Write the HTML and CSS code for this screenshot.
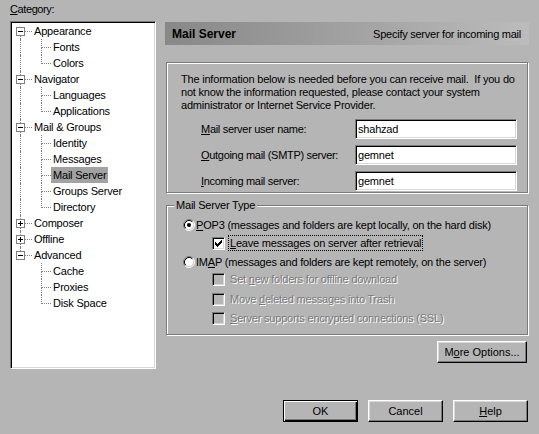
FILE: index.html
```html
<!DOCTYPE html>
<html>
<head>
<meta charset="utf-8">
<title>Preferences</title>
<link rel="stylesheet" href="styles.css">
</head>
<body>
<div class="dlg">
  <div class="main">
    <div class="left">
      <div class="cat-label"><u>C</u>ategory:</div>
      <div class="tree">
        <div class="row">
          <span class="rail"><span class="seg t"></span><svg class="box" width="9" height="9" viewBox="0 0 9 9"><rect x=".5" y=".5" width="8" height="8" fill="#fff" stroke="#808080"/><path d="M2 4.5h5" stroke="#000"/></svg><span class="seg b on"></span></span>
          <span class="hd"></span><span class="lbl">Appearance</span>
        </div>
        <div class="row"><span class="vl on"></span><span class="elb"><span class="u"></span><span class="d on"></span></span><span class="lbl">Fonts</span></div>
        <div class="row"><span class="vl on"></span><span class="elb"><span class="u"></span><span class="d"></span></span><span class="lbl">Colors</span></div>
        <div class="row">
          <span class="rail"><span class="seg t on"></span><svg class="box" width="9" height="9" viewBox="0 0 9 9"><rect x=".5" y=".5" width="8" height="8" fill="#fff" stroke="#808080"/><path d="M2 4.5h5" stroke="#000"/></svg><span class="seg b on"></span></span>
          <span class="hd"></span><span class="lbl">Navigator</span>
        </div>
        <div class="row"><span class="vl on"></span><span class="elb"><span class="u"></span><span class="d on"></span></span><span class="lbl">Languages</span></div>
        <div class="row"><span class="vl on"></span><span class="elb"><span class="u"></span><span class="d"></span></span><span class="lbl">Applications</span></div>
        <div class="row">
          <span class="rail"><span class="seg t on"></span><svg class="box" width="9" height="9" viewBox="0 0 9 9"><rect x=".5" y=".5" width="8" height="8" fill="#fff" stroke="#808080"/><path d="M2 4.5h5" stroke="#000"/></svg><span class="seg b on"></span></span>
          <span class="hd"></span><span class="lbl">Mail &amp; Groups</span>
        </div>
        <div class="row"><span class="vl on"></span><span class="elb"><span class="u"></span><span class="d on"></span></span><span class="lbl">Identity</span></div>
        <div class="row"><span class="vl on"></span><span class="elb"><span class="u"></span><span class="d on"></span></span><span class="lbl">Messages</span></div>
        <div class="row"><span class="vl on"></span><span class="elb"><span class="u"></span><span class="d on"></span></span><span class="lbl sel">Mail Server</span></div>
        <div class="row"><span class="vl on"></span><span class="elb"><span class="u"></span><span class="d on"></span></span><span class="lbl">Groups Server</span></div>
        <div class="row"><span class="vl on"></span><span class="elb"><span class="u"></span><span class="d"></span></span><span class="lbl">Directory</span></div>
        <div class="row">
          <span class="rail"><span class="seg t on"></span><svg class="box" width="9" height="9" viewBox="0 0 9 9"><rect x=".5" y=".5" width="8" height="8" fill="#fff" stroke="#808080"/><path d="M2 4.5h5M4.5 2v5" stroke="#000"/></svg><span class="seg b on"></span></span>
          <span class="hd"></span><span class="lbl">Composer</span>
        </div>
        <div class="row">
          <span class="rail"><span class="seg t on"></span><svg class="box" width="9" height="9" viewBox="0 0 9 9"><rect x=".5" y=".5" width="8" height="8" fill="#fff" stroke="#808080"/><path d="M2 4.5h5M4.5 2v5" stroke="#000"/></svg><span class="seg b on"></span></span>
          <span class="hd"></span><span class="lbl">Offline</span>
        </div>
        <div class="row">
          <span class="rail"><span class="seg t on"></span><svg class="box" width="9" height="9" viewBox="0 0 9 9"><rect x=".5" y=".5" width="8" height="8" fill="#fff" stroke="#808080"/><path d="M2 4.5h5" stroke="#000"/></svg><span class="seg b"></span></span>
          <span class="hd"></span><span class="lbl">Advanced</span>
        </div>
        <div class="row"><span class="vl"></span><span class="elb"><span class="u"></span><span class="d on"></span></span><span class="lbl">Cache</span></div>
        <div class="row"><span class="vl"></span><span class="elb"><span class="u"></span><span class="d on"></span></span><span class="lbl">Proxies</span></div>
        <div class="row"><span class="vl"></span><span class="elb"><span class="u"></span><span class="d"></span></span><span class="lbl">Disk Space</span></div>
      </div>
    </div>

    <div class="right">
      <div class="hdr"><span class="hdr-title">Mail Server</span><span class="hdr-desc">Specify server for incoming mail</span></div>

      <div class="grp grp1">
        <p class="info">The information below is needed before you can receive mail.&nbsp; If you do<br>not know the information requested, please contact your system<br>administrator or Internet Service Provider.</p>
        <div class="field first"><span class="flabel"><u>M</u>ail server user name:</span><input class="tb" type="text" value="shahzad"></div>
        <div class="field"><span class="flabel"><u>O</u>utgoing mail (SMTP) server:</span><input class="tb" type="text" value="gemnet"></div>
        <div class="field"><span class="flabel"><u>I</u>ncoming mail server:</span><input class="tb" type="text" value="gemnet"></div>
      </div>

      <div class="grp grp2">
        <div class="legend">Mail Server Type</div>
        <div class="opt radio-row r1">
          <svg class="radio" width="12" height="12" viewBox="0 0 12 12"><circle cx="6" cy="6" r="4.5" fill="#fff"/><path d="M2.11 9.89A5.5 5.5 0 0 1 9.89 2.11" fill="none" stroke="#7a7a7a"/><path d="M9.89 2.11A5.5 5.5 0 0 1 2.11 9.89" fill="none" stroke="#fff"/><path d="M2.82 9.18A4.5 4.5 0 0 1 9.18 2.82" fill="none" stroke="#000"/><path d="M9.18 2.82A4.5 4.5 0 0 1 2.82 9.18" fill="none" stroke="#d8d8d8"/><circle cx="6" cy="6" r="2" fill="#000"/></svg>
          <span class="txt"><u>P</u>OP3 (messages and folders are kept locally, on the hard disk)</span>
        </div>
        <div class="opt chk-row c1">
          <span class="chk"><svg width="11" height="11" viewBox="0 0 11 11" shape-rendering="crispEdges"><path d="M8 2h1v1H8zM7 3h2v1H7zM2 4h1v1H2zM6 4h3v1H6zM2 5h2v1H2zM5 5h3v1H5zM2 6h5v1H2zM3 7h3v1H3zM4 8h1v1H4z" fill="#000"/></svg></span>
          <span class="txt focus"><u>L</u>eave messages on server after retrieval</span>
        </div>
        <div class="opt radio-row r2">
          <svg class="radio" width="12" height="12" viewBox="0 0 12 12"><circle cx="6" cy="6" r="4.5" fill="#fff"/><path d="M2.11 9.89A5.5 5.5 0 0 1 9.89 2.11" fill="none" stroke="#7a7a7a"/><path d="M9.89 2.11A5.5 5.5 0 0 1 2.11 9.89" fill="none" stroke="#fff"/><path d="M2.82 9.18A4.5 4.5 0 0 1 9.18 2.82" fill="none" stroke="#000"/><path d="M9.18 2.82A4.5 4.5 0 0 1 2.82 9.18" fill="none" stroke="#d8d8d8"/></svg>
          <span class="txt">IM<u>A</u>P (messages and folders are kept remotely, on the server)</span>
        </div>
        <div class="opt chk-row dis c2"><span class="chk"></span><span class="txt">Set <u>n</u>ew folders for offline download</span></div>
        <div class="opt chk-row dis c3"><span class="chk"></span><span class="txt">Move <u>d</u>eleted messages into Trash</span></div>
        <div class="opt chk-row dis c4"><span class="chk"></span><span class="txt"><u>S</u>erver supports encrypted connections (SSL)</span></div>
      </div>

      <div class="more-row"><button class="btn more" type="button">M<u>o</u>re Options...</button></div>
    </div>
  </div>

  <div class="footer">
    <button class="btn default" type="button">OK</button>
    <button class="btn" type="button">Cancel</button>
    <button class="btn" type="button"><u>H</u>elp</button>
  </div>
</div>
</body>
</html>
```

FILE: styles.css
```css
:root {
  --bg: #b5b5b5;
  --shadow: #7a7a7a;
  --light: #d8d8d8;
  --dot: #808080;
}

* { box-sizing: border-box; }

html, body {
  margin: 0;
  padding: 0;
  background: var(--bg);
}

body {
  width: 539px;
  height: 434px;
  overflow: hidden;
  font-family: "Liberation Sans", Arial, sans-serif;
  font-size: 11px;
  letter-spacing: -0.2px;
  color: #000;
}

.dlg {
  display: flex;
  flex-direction: column;
}

.main {
  display: flex;
  height: 369px;
}

/* ---------- left: category tree ---------- */
.left {
  width: 146px;
  margin-left: 10px;
  display: flex;
  flex-direction: column;
}

.cat-label {
  margin-top: 3px;
  height: 18px;
  line-height: 13px;
  letter-spacing: -0.4px;
}

.tree {
  height: 348px;
  background: #fff;
  border: 1px solid;
  border-color: var(--shadow) #fff #fff var(--shadow);
  box-shadow: inset 1px 1px 0 #000, inset -1px -1px 0 var(--light);
  padding: 1px;
}

.row {
  display: flex;
  height: 16px;
}

.rail {
  width: 9px;
  margin-left: 4px;
  display: flex;
  flex-direction: column;
}

.seg {
  width: 1px;
  margin-left: 4px;
}
.seg.t { height: 4px; }
.seg.b { height: 3px; }
.seg.on { border-left: 1px dotted var(--dot); }

.box { display: block; flex: none; }

.hd {
  width: 7px;
  height: 9px;
  border-bottom: 1px dotted var(--dot);
}

.vl {
  width: 1px;
  margin-left: 8px;
}
.vl.on { border-left: 1px dotted var(--dot); }

.elb {
  width: 10px;
  margin-left: 20px;
  display: flex;
  flex-direction: column;
}
.elb .u {
  height: 9px;
  border-left: 1px dotted var(--dot);
  border-bottom: 1px dotted var(--dot);
}
.elb .d { flex: 1; }
.elb .d.on { border-left: 1px dotted var(--dot); }

.lbl {
  line-height: 16px;
  padding: 0 2px;
  white-space: nowrap;
}
.lbl.sel { background: #a2a2a2; }

/* ---------- right pane ---------- */
.right {
  width: 364px;
  margin-left: 9px;
  display: flex;
  flex-direction: column;
}

.hdr {
  margin-top: 22px;
  height: 23px;
  display: flex;
  align-items: center;
  justify-content: space-between;
  padding: 0 8px 0 7px;
  background: linear-gradient(to right, #888888, #a6a6a6 60%, #bcbcbc);
}

.hdr-title {
  font-weight: bold;
  font-size: 12px;
  letter-spacing: 0;
}

.hdr-desc { letter-spacing: -0.25px; }

.grp {
  width: 362px;
  margin-left: 1px;
  border: 1px solid var(--shadow);
  box-shadow: inset 1px 1px 0 #fff, 1px 1px 0 #fff;
}

.grp1 {
  margin-top: 17px;
  padding: 10px 0 1px 14px;
}

.info {
  margin: 0;
  line-height: 13px;
  white-space: nowrap;
}

.field {
  display: flex;
  align-items: center;
  height: 20px;
  margin-top: 6px;
}
.field.first { margin-top: 7px; }

.flabel {
  margin-left: 20px;
  width: 154px;
  white-space: nowrap;
  letter-spacing: -0.3px;
}

.tb {
  width: 162px;
  height: 20px;
  margin: 0;
  padding: 0 2px;
  font: inherit;
  letter-spacing: -0.2px;
  color: #000;
  background: #fff;
  border: 1px solid;
  border-color: var(--shadow) #fff #fff var(--shadow);
  box-shadow: inset 1px 1px 0 #000, inset -1px -1px 0 var(--light);
  outline: none;
}

.grp2 {
  margin-top: 12px;
  padding: 0 0 8px 0;
  display: flex;
  flex-direction: column;
}

.legend {
  align-self: flex-start;
  margin: -7px 0 0 7px;
  padding: 0 2px;
  line-height: 13px;
  background: var(--bg);
}

.opt {
  display: flex;
  align-items: center;
  height: 16px;
  white-space: nowrap;
}

.radio-row { margin-left: 16px; }
.radio-row .txt { margin-left: 1px; }
.radio { display: block; flex: none; }

.chk-row { margin-left: 45px; }

.r1 { margin-top: 5px; }
.c1 { margin-top: 2px; }
.r2 { margin-top: 3px; }
.c2 { margin-top: 1px; }
.c3 { margin-top: 4px; }
.c4 { margin-top: 3px; }

.chk {
  flex: none;
  width: 13px;
  height: 13px;
  padding: 1px;
  background: #fff;
  border: 1px solid;
  border-color: var(--shadow) #fff #fff var(--shadow);
  box-shadow: inset 1px 1px 0 #000, inset -1px -1px 0 var(--light);
}
.chk svg { display: block; margin: -1px 0 0 -1px; }

.chk-row .txt {
  margin-left: 3px;
  padding: 0 1px;
  line-height: 14px;
  border: 1px solid transparent;
}
.chk-row .txt.focus { border: 1px dotted #000; }

.dis .chk {
  background: var(--bg);
}
.dis .txt {
  color: #7a7a7a;
  text-shadow: 1px 1px 0 #fff;
}

/* ---------- buttons ---------- */
.btn {
  width: 75px;
  height: 22px;
  margin: 0;
  padding: 0;
  font: inherit;
  color: #000;
  background: var(--bg);
  border: 1px solid;
  border-color: #fff #000 #000 #fff;
  box-shadow: inset -1px -1px 0 var(--shadow), inset 1px 1px 0 var(--light);
  text-align: center;
  line-height: 18px;
  cursor: default;
}

.btn.default {
  border: 1px solid #000;
  box-shadow: inset 1px 1px 0 #fff, inset -1px -1px 0 #000, inset -2px -2px 0 var(--shadow);
}

.more-row {
  display: flex;
  justify-content: flex-end;
  margin-top: 6px;
  padding-right: 2px;
}

.btn.more { width: 90px; }

.footer {
  display: flex;
  justify-content: flex-end;
  gap: 10px;
  margin-top: 31px;
  padding-right: 11px;
}
```
